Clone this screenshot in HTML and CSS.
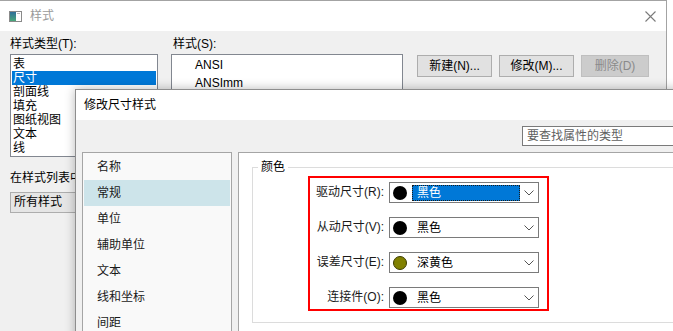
FILE: index.html
```html
<!DOCTYPE html>
<html lang="zh-CN">
<head>
<meta charset="utf-8">
<title>样式</title>
<link rel="stylesheet" href="styles.css">
</head>
<body>
<div class="desk">
  <div class="win back">
    <div class="titlebar">
      <svg class="appicon" width="13" height="11" viewBox="0 0 13 11">
        <defs><linearGradient id="g" x1="0" y1="0" x2="0" y2="1"><stop offset="0" stop-color="#2f6f9a"/><stop offset="1" stop-color="#49a77a"/></linearGradient></defs>
        <rect x="0.5" y="0.5" width="12" height="10" fill="#fff" stroke="#8a8a8a"/>
        <rect x="1" y="1" width="6" height="9" fill="url(#g)"/>
        <rect x="8" y="2" width="3" height="1" fill="#bbb"/>
      </svg>
      <span class="wtitle">样式</span>
      <svg class="close" width="11" height="11" viewBox="0 0 11 11"><path d="M0.5 0.5 L10.5 10.5 M10.5 0.5 L0.5 10.5" stroke="#7a7a7a" stroke-width="1.1" fill="none"/></svg>
    </div>
    <div class="wbody">
      <div class="col col-left">
        <div class="lbl">样式类型(T):</div>
        <div class="listbox types">
          <div class="li">表</div>
          <div class="li sel">尺寸</div>
          <div class="li">剖面线</div>
          <div class="li">填充</div>
          <div class="li">图纸视图</div>
          <div class="li">文本</div>
          <div class="li">线</div>
        </div>
        <div class="lbl lbl-show">在样式列表中</div>
        <div class="combo-plain">所有样式</div>
      </div>
      <div class="col col-mid">
        <div class="lbl lbl-s">样式(S):</div>
        <div class="listbox styles">
          <div class="si">ANSI</div>
          <div class="si">ANSImm</div>
        </div>
      </div>
      <div class="buttons">
        <div class="btn">新建(N)...</div>
        <div class="btn">修改(M)...</div>
        <div class="btn btn-dis">删除(D)</div>
      </div>
    </div>
  </div>

  <div class="win front">
    <div class="titlebar ftitle">修改尺寸样式</div>
    <div class="fbody">
      <div class="search">要查找属性的类型</div>
      <div class="main">
        <div class="nav">
          <div class="ni">名称</div>
          <div class="ni nsel">常规</div>
          <div class="ni">单位</div>
          <div class="ni">辅助单位</div>
          <div class="ni">文本</div>
          <div class="ni">线和坐标</div>
          <div class="ni">间距</div>
        </div>
        <div class="content">
          <div class="group">
            <span class="gtitle">颜色</span>
            <div class="redbox">
              <div class="rlbl">驱动尺寸(R):</div>
              <div class="cb">
                <span class="dot"></span>
                <span class="ctext hl">黑色</span>
                <svg class="chev" width="10" height="6" viewBox="0 0 10 6"><path d="M0.5 0.5 L5 5 L9.5 0.5" stroke="#555" fill="none"/></svg>
              </div>
              <div class="rlbl">从动尺寸(V):</div>
              <div class="cb">
                <span class="dot"></span>
                <span class="ctext">黑色</span>
                <svg class="chev" width="10" height="6" viewBox="0 0 10 6"><path d="M0.5 0.5 L5 5 L9.5 0.5" stroke="#555" fill="none"/></svg>
              </div>
              <div class="rlbl">误差尺寸(E):</div>
              <div class="cb">
                <span class="dot olive"></span>
                <span class="ctext">深黄色</span>
                <svg class="chev" width="10" height="6" viewBox="0 0 10 6"><path d="M0.5 0.5 L5 5 L9.5 0.5" stroke="#555" fill="none"/></svg>
              </div>
              <div class="rlbl">连接件(O):</div>
              <div class="cb">
                <span class="dot"></span>
                <span class="ctext">黑色</span>
                <svg class="chev" width="10" height="6" viewBox="0 0 10 6"><path d="M0.5 0.5 L5 5 L9.5 0.5" stroke="#555" fill="none"/></svg>
              </div>
            </div>
          </div>
        </div>
      </div>
    </div>
  </div>
</div>
</body>
</html>
```
FILE: styles.css
```css
* { box-sizing: border-box; }
html, body {
  margin: 0;
  padding: 0;
  width: 673px;
  height: 331px;
  overflow: hidden;
  background: #ffffff;
  font-family: "Liberation Sans", "Noto Sans CJK SC", sans-serif;
  font-size: 12px;
  color: #000;
}
.desk {
  position: relative;
  width: 673px;
  height: 331px;
  overflow: hidden;
}
.win {
  position: absolute;
  background: #f0f0f0;
}
.back {
  left: 0;
  top: 0;
  width: 667px;
  height: 340px;
  border-top: 1px solid #a3a3a3;
  border-right: 1px solid #a3a3a3;
}
.titlebar {
  display: flex;
  align-items: center;
  height: 30px;
  background: #ffffff;
}
.back .titlebar { padding-left: 9px; }
.appicon { display: block; }
.wtitle {
  margin-left: 8px;
  color: #9a9a9a;
  line-height: 30px;
}
.close { margin-left: auto; margin-right: 10px; }

.wbody {
  display: flex;
  align-items: flex-start;
  padding: 6px 0 0 10px;
}
.col { display: flex; flex-direction: column; flex: none; }
.col-left { width: 148px; }
.col-mid { width: 232px; margin-left: 13px; }
.lbl { line-height: 14px; margin-bottom: 3px; white-space: nowrap; }
.lbl-s { padding-left: 2px; }
.listbox {
  background: #fff;
  border: 1px solid #828790;
}
.types { height: 103px; padding: 2px 1px 0 1px; }
.li { height: 14px; line-height: 14px; padding-left: 1px; }
.li.sel { background: #0078d7; color: #fff; }
.lbl-show {
  margin-top: 14px;
  margin-bottom: 7px;
}
.combo-plain {
  height: 21px;
  line-height: 19px;
  border: 1px solid #adadad;
  background: #e5e5e5;
  padding-left: 3px;
}
.styles { height: 220px; padding: 1px 0 0 23px; }
.si { height: 18px; line-height: 18px; }
.buttons {
  display: flex;
  gap: 7px;
  margin-left: 14px;
  margin-top: 18px;
}
.btn {
  width: 75px;
  height: 22px;
  line-height: 20px;
  text-align: center;
  border: 1px solid #adadad;
  background: #e1e1e1;
}
.btn-dis {
  width: 68px;
  background: #cccccc;
  border-color: #bfbfbf;
  color: #8a8a8a;
}

/* front dialog */
.front {
  left: 75px;
  top: 89px;
  width: 720px;
  height: 260px;
  border: 1px solid #8e8e8e;
  box-shadow: 0 0 10px rgba(0,0,0,0.28);
  overflow: hidden;
}
.ftitle {
  padding-left: 8px;
  line-height: 30px;
  color: #000;
}
.fbody { padding: 6px 0 0 6px; }
.search {
  margin-left: 440px;
  width: 200px;
  height: 20px;
  line-height: 18px;
  border: 1px solid #7a7a7a;
  background: #fff;
  padding-left: 4px;
  color: #5f5f5f;
}
.main {
  display: flex;
  gap: 6px;
  margin-top: 6px;
}
.nav {
  flex: none;
  width: 150px;
  height: 200px;
  background: #f9f9f9;
  border: 1px solid #a5a5a5;
  padding: 1px 1px 0 1px;
}
.ni {
  height: 26px;
  line-height: 26px;
  padding-left: 13px;
  color: #1a1a1a;
}
.ni.nsel { background: #cde4ea; }
.content {
  flex: none;
  width: 540px;
  height: 200px;
  background: #fff;
  border-left: 1px solid #a5a5a5;
  border-top: 1px solid #a5a5a5;
  padding: 14px 0 0 13px;
}
.group {
  width: 520px;
  border: 1px solid #dcdcdc;
  padding: 0 0 11px 0;
}
.gtitle {
  display: inline-block;
  margin: -8px 0 0 5px;
  padding: 0 3px;
  line-height: 14px;
  background: #fff;
  vertical-align: top;
}
.redbox {
  margin-left: 55px;
  margin-top: -6px;
  width: 241px;
  border: 2px solid #ff0000;
  display: grid;
  grid-template-columns: 1fr 150px;
  column-gap: 5px;
  row-gap: 14px;
  padding: 4px 8px 1px 6px;
}
.rlbl {
  text-align: right;
  line-height: 21px;
  white-space: nowrap;
  color: #1a1a1a;
}
.cb {
  height: 21px;
  border: 1px solid #7a7a7a;
  background: #fff;
  display: flex;
  align-items: center;
  padding-left: 3px;
}
.dot {
  width: 14px;
  height: 14px;
  border-radius: 50%;
  background: #000;
  flex: none;
}
.dot.olive { background: #808000; border: 1px solid #3c3c00; }
.ctext {
  margin-left: 5px;
  width: 108px;
  height: 16px;
  line-height: 16px;
  padding-left: 5px;
}
.ctext.hl {
  background: #0078d7;
  color: #fff;
  outline: 1px dotted #1b1b1b;
  outline-offset: -1px;
}
.chev { margin-left: auto; margin-right: 4px; display: block; }
```
